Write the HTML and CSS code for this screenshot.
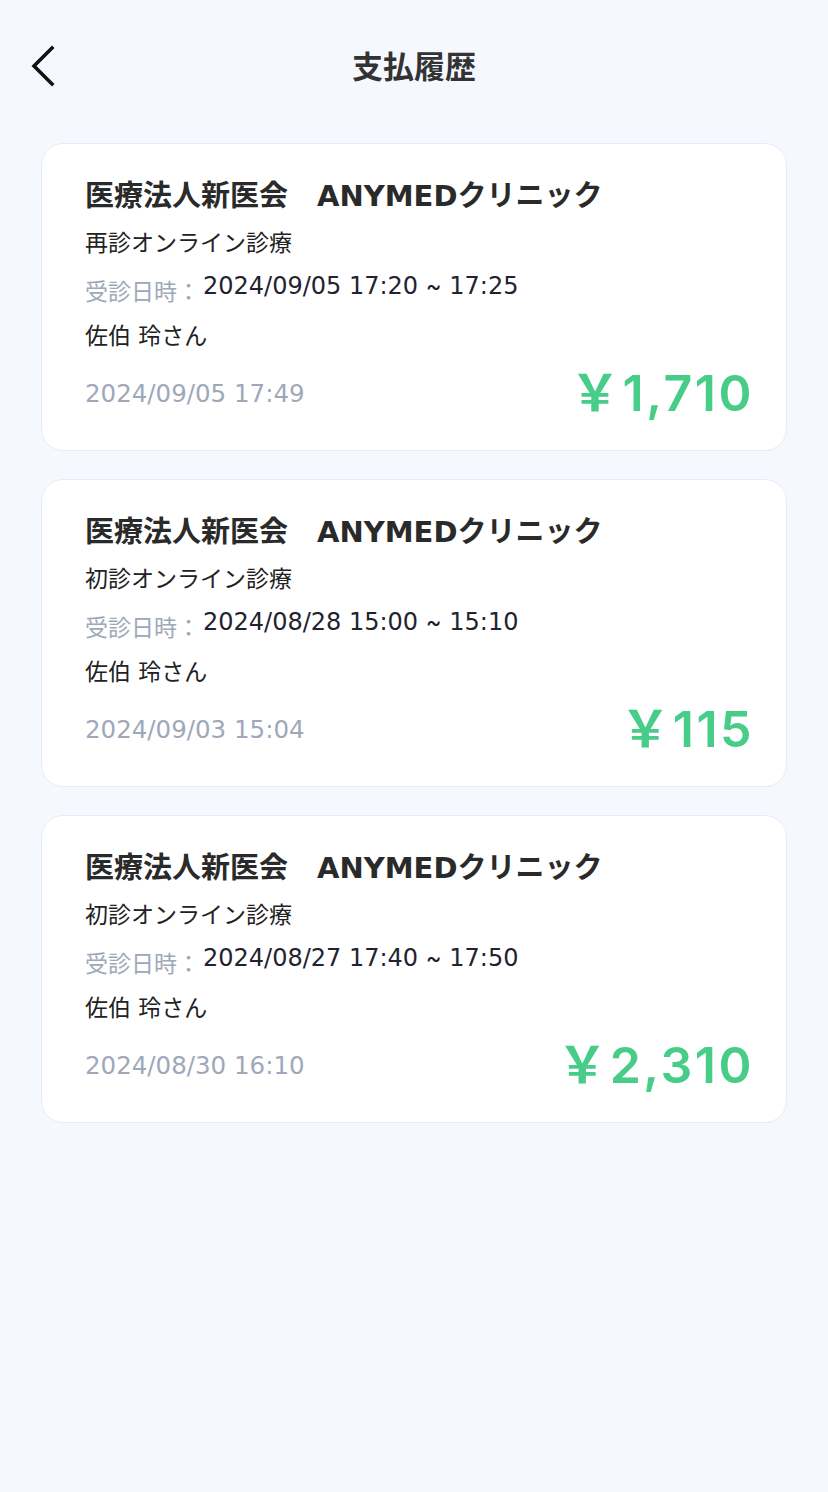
FILE: index.html
```
<!DOCTYPE html>
<html lang="ja">
<head>
  <meta charset="UTF-8" />
  <meta name="viewport" content="width=device-width, initial-scale=1.0"/>
  <title>支払履歴</title>
  <link rel="stylesheet" href="styles.css">
</head>
<body>
  <header class="topbar">
    <button class="back" aria-label="戻る">
      <svg width="30" height="42" viewBox="0 0 30 42" fill="none" stroke="#111" stroke-width="3.6" stroke-linecap="square">
        <path d="M24 3 L6 21 L24 39"/>
      </svg>
    </button>
    <h1>支払履歴</h1>
  </header>

  <main class="list">
    <div class="card">
      <div class="clinic">医療法人新医会　ANYMEDクリニック</div>
      <div class="kind">再診オンライン診療</div>
      <div class="visit"><span class="label">受診日時：</span>2024/09/05 17:20 <span class="tilde">~</span> 17:25</div>
      <div class="patient">佐伯 玲さん</div>
      <div class="foot">
        <span class="paid-at">2024/09/05 17:49</span>
        <span class="price">￥1,710</span>
      </div>
    </div>

    <div class="card">
      <div class="clinic">医療法人新医会　ANYMEDクリニック</div>
      <div class="kind">初診オンライン診療</div>
      <div class="visit"><span class="label">受診日時：</span>2024/08/28 15:00 <span class="tilde">~</span> 15:10</div>
      <div class="patient">佐伯 玲さん</div>
      <div class="foot">
        <span class="paid-at">2024/09/03 15:04</span>
        <span class="price">￥115</span>
      </div>
    </div>

    <div class="card">
      <div class="clinic">医療法人新医会　ANYMEDクリニック</div>
      <div class="kind">初診オンライン診療</div>
      <div class="visit"><span class="label">受診日時：</span>2024/08/27 17:40 <span class="tilde">~</span> 17:50</div>
      <div class="patient">佐伯 玲さん</div>
      <div class="foot">
        <span class="paid-at">2024/08/30 16:10</span>
        <span class="price">￥2,310</span>
      </div>
    </div>
  </main>
</body>
</html>
```

FILE: styles.css
```
:root {
  --bg:#f5f9ff;
  --card:#ffffff;
  --line:#e6edf7;
  --text:#222222;
  --muted:#9ea8ba;
  --green:#47cd88;
  font-family: "DejaVu Sans", "Noto Sans CJK JP", sans-serif;
}
*{box-sizing:border-box;}
body {
  margin:0;
  background: var(--bg);
  color: var(--text);
  min-height:100vh;
}
.topbar {
  position:relative;
  height:134px;
  display:flex;
  align-items:center;
  justify-content:center;
  padding-bottom:6px;
}
.topbar h1 {
  margin:0;
  font-size:31px;
  font-weight:700;
  color:#333;
}
.back {
  position:absolute;
  left:28px;
  top:45px;
  background:none;
  border:none;
  padding:0;
  cursor:pointer;
}
.list {
  display:flex;
  flex-direction:column;
  gap:28px;
  padding:9px 41px 0;
}
.card {
  background: var(--card);
  border:1.5px solid var(--line);
  border-radius:22px;
  height:308px;
  padding:31px 34px 0 43px;
}
.clinic {font-size:29px; font-weight:700; line-height:42px; color:#2a2a2a;}
.kind {font-size:23px; line-height:32px; margin-top:10px;}
.visit {font-size:24px; line-height:34px; margin-top:10px; color:#1f2430;}
.label {font-size:23px; color: var(--muted); position:relative; top:6px; margin-right:3px;}
.tilde {font-family: Inter, sans-serif;}
.patient {font-size:23px; line-height:32px; margin-top:17px;}
.foot {
  display:flex;
  justify-content:space-between;
  align-items:center;
  margin-top:11px;
}
.paid-at {font-size:24.5px; color: var(--muted);}
.price {font-family: Inter, "Noto Sans CJK JP", sans-serif; font-size:50px; font-weight:600; color: var(--green); line-height:60px; letter-spacing:2.5px; margin-right:-2px;}
```
